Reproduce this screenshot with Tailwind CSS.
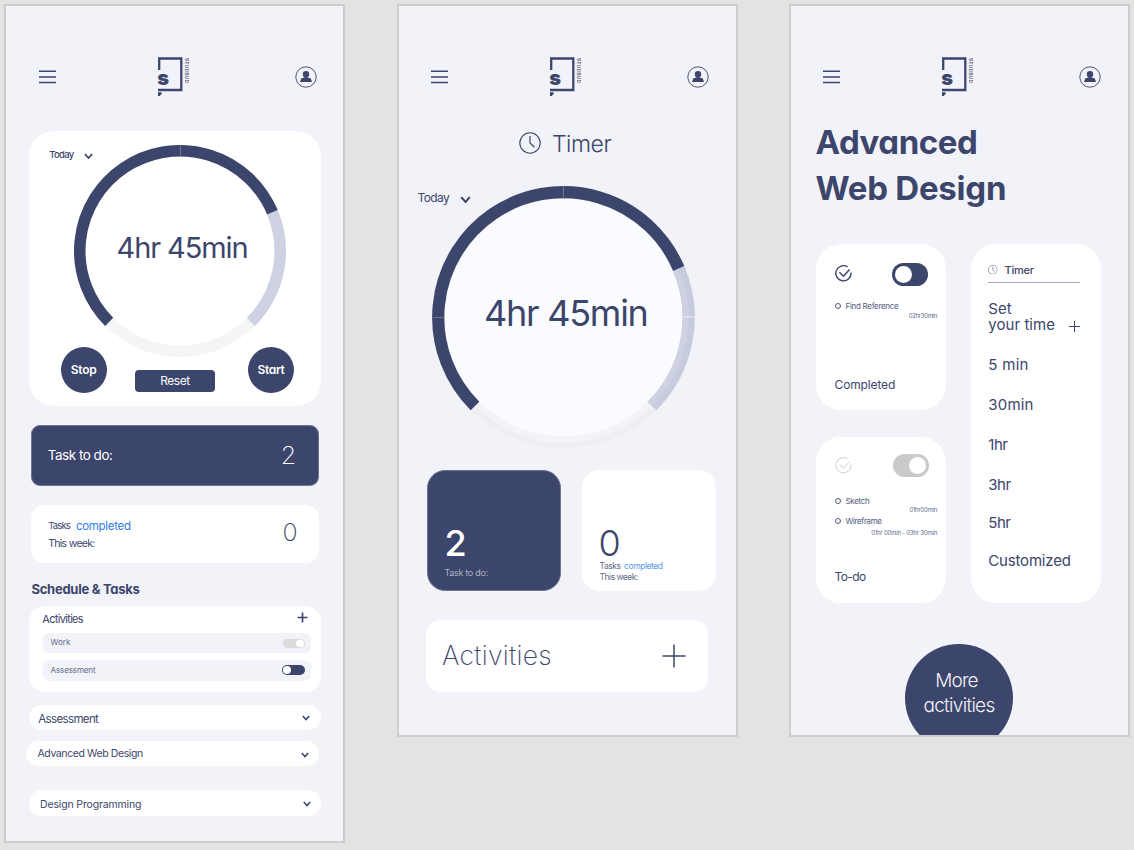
<!DOCTYPE html>
<html lang="en">
<head>
<meta charset="utf-8">
<title>Studbud</title>
<script src="https://cdn.jsdelivr.net/npm/@tailwindcss/browser@4"></script>
</head>
<body class="h-[850px] w-[1134px] overflow-hidden bg-[#e3e3e3] font-['Inter',sans-serif] whitespace-nowrap text-[#3c456b]">

<!-- Shared symbols -->
<svg class="hidden">
  <symbol id="menu" viewBox="0 0 17 14"><path d="M0 1.2h17M0 7h17M0 12.5h17" stroke="#3c456b" stroke-width="1.4" fill="none"/></symbol>
  <symbol id="user" viewBox="0 0 22 22"><circle cx="11" cy="11" r="10.2" fill="none" stroke="#3c456b" stroke-width=".9"/><circle cx="11" cy="8.200" r="3.200" fill="#3c456b"/><path d="M9.500 10.500h3v1.300h1.700q2.200.6 2.700 4.200H5.100q.5-3.600 2.700-4.200h1.700z" fill="#3c456b"/></symbol>
  <symbol id="logo" viewBox="0 0 32 40">
    <path d="M2.200 13V1.500H24.300V33H1" fill="none" stroke="#3c456b" stroke-width="2.300"/>
    <path d="M1 35.300h3.600v2l-1.200 .8-.6 .9H1z" fill="#3c456b"/>
    <text x="0.200" y="28" font-family="Inter" font-weight="900" font-size="20" fill="#3c456b">s</text>
    <text transform="translate(27.500 1) rotate(90)" font-family="Inter" font-weight="500" font-size="5" fill="#3c456b" textLength="25">STUDBUD</text>
  </symbol>
  <symbol id="chev" viewBox="0 0 10 7"><path d="M1 1l4 4.500 4-4.500" fill="none" stroke="#3c456b" stroke-width="1.900"/></symbol>
  <symbol id="plus" viewBox="0 0 12 12"><path d="M6 .5v11M.5 6h11" fill="none" stroke="#3c456b" stroke-width="1.800"/></symbol>
  <symbol id="clock" viewBox="0 0 22 22"><circle cx="11" cy="11" r="10.200" fill="none" stroke="#3c456b" stroke-width="1.100"/><path d="M11 4v7l4.500 4.300" fill="none" stroke="#3c456b" stroke-width="1.200"/></symbol>
  <symbol id="check" viewBox="0 0 17 17"><path d="M12.600 1.900A7.600 7.600 0 1 0 16 7.500" fill="none" stroke="currentColor" stroke-width="1.400"/><path d="M4.300 7.200l4.200 4 6-6.800" fill="none" stroke="currentColor" stroke-width="1.500"/></symbol>
  <symbol id="check-thin" viewBox="0 0 17 17"><path d="M12.600 1.900A7.600 7.600 0 1 0 16 7.500" fill="none" stroke="currentColor" stroke-width="1"/><path d="M4.300 7.200l4.200 4 6-6.800" fill="none" stroke="currentColor" stroke-width="1"/></symbol>
</svg>

<main class="flex items-start pt-1 pl-1">

  <!-- Home -->
  <section class="h-[839px] w-[341px] border-2 border-[#cbcccd] bg-[#f2f3f8]">
    <header class="mt-[51px] flex h-10 items-start">
      <svg class="mt-[13px] ml-[33px] h-[14px] w-[17px]"><use href="#menu"/></svg>
      <svg class="ml-[100.500px] h-10 w-8"><use href="#logo"/></svg>
      <svg class="mt-[9px] ml-[106px] size-[22px]"><use href="#user"/></svg>
    </header>

    <article class="mt-[34px] ml-[22.5px] grid h-[275px] w-[292.5px] rounded-[25px] bg-white *:col-start-1 *:row-start-1">
      <svg class="mt-[13.5px] ml-[45.5px] size-[212px]" viewBox="-106 -106 212 212" fill="none" stroke-width="11.5">
        <circle r="100.200" stroke="#f4f5f7"/>
        <path d="M92.400 -38.700A100.200 100.200 0 0 1 70.850 70.850" stroke="#ced1e1"/>
        <path d="M-70.850 70.850A100.200 100.200 0 1 1 92.400 -38.700" stroke="#3c456b"/>
        <path d="M.5 -106v12" stroke="#6f7694" stroke-width="1"/>
      </svg>
      <div class="mt-[19.4px] ml-[20.700px] flex items-start self-start">
        <span class="w-[25px] text-[9.500px] leading-[10px] font-medium tracking-[-0.700px]">Today</span>
        <svg class="mt-[2.300px] ml-[9.500px] h-[6.500px] w-[9px]"><use href="#chev"/></svg>
      </div>
      <h2 class="mt-[102.2px] ml-[88px] self-start text-[29px] leading-[29px] tracking-[-1.100px]">4hr 45min</h2>
      <div class="mt-[215.7px] flex items-start self-start pl-[32.2px] text-xs text-white">
        <button class="size-[46px] rounded-full bg-[#3c456b] font-semibold tracking-[-0.2px]">Stop</button>
        <button class="mt-[23.800px] ml-[28.300px] h-[21.500px] w-[80px] rounded-[4px] bg-[#3c456b] tracking-[-0.47px]">Reset</button>
        <button class="ml-[33px] size-[46px] rounded-full bg-[#3c456b] font-semibold tracking-[-0.3px] [font-feature-settings:'cv11']">Start</button>
      </div>
    </article>

    <article class="mt-[19px] ml-[24.800px] flex h-[60.7px] w-[288.500px] items-center justify-between rounded-[9px] border border-[#6d7596] bg-[#3c456b] pr-[22px] pl-[16px] text-white">
      <span class="text-[13.500px] tracking-[-0.500px]">Task to do:</span>
      <span class="text-[25px] font-extralight">2</span>
    </article>

    <article class="mt-[19.300px] ml-[25px] flex h-[58px] w-[288px] items-start justify-between rounded-[14px] bg-white pr-[21.500px] pl-[17.200px]">
      <div class="pt-[16px]">
        <p class="flex leading-[11.5px]"><span class="w-[27.800px] text-[9.500px] leading-[10px] tracking-[-0.85px]">Tasks</span><span class="text-[11.5px] tracking-[-0.3px] text-[#2f7be8]">completed</span></p>
        <p class="mt-[5.500px] text-[10.500px] leading-[11px] tracking-[-0.7px]">This week:</p>
      </div>
      <span class="mt-[15.400px] text-[25px] leading-[25px] font-extralight">0</span>
    </article>

    <h3 class="mt-[19.800px] ml-[25.500px] text-[13px] leading-[13px] font-bold tracking-[-0.27px] [font-feature-settings:'cv11']">Schedule &amp; Tasks</h3>

    <article class="mt-[10.200px] ml-[22.500px] h-[86.500px] w-[292.500px] rounded-[16px] bg-white pt-[7.200px] pr-[10.500px] pl-[14.500px]">
      <div class="flex h-[19.800px] items-start justify-between">
        <h4 class="-ml-[0.700px] mt-[0.500px] text-[11px] leading-[11px] tracking-[-0.680px]">Activities</h4>
        <svg class="mr-[2.500px] -mt-[0.700px] size-[11px]"><use href="#plus"/></svg>
      </div>
      <div class="flex h-5 items-center justify-between rounded-[6px] bg-[#f2f3f8] pr-[6px] pl-[7.500px] text-[8px] text-[#626a8b]">
        <span class="-mt-px">Work</span>
        <i class="mt-px flex h-[9.500px] w-[22px] justify-end rounded-full bg-[#dcdcdd] p-px"><b class="size-[7.500px] rounded-full bg-white"></b></i>
      </div>
      <div class="mt-[7px] flex h-[21px] items-center justify-between rounded-[6px] bg-[#f2f3f8] pr-[6px] pl-[7.500px] text-[8px] text-[#626a8b]">
        <span class="tracking-[-0.11px]">Assessment</span>
        <i class="flex h-[10px] w-[22.500px] rounded-full bg-[#3c456b] p-px"><b class="size-[8px] rounded-full bg-white"></b></i>
      </div>
    </article>

    <article class="mt-[12.700px] ml-[22.500px] flex h-[25px] w-[292.500px] items-start justify-between rounded-[12.500px] bg-white pr-[11px] pl-[9.700px]">
      <span class="mt-[9.300px] text-[11.500px] leading-[11.500px] tracking-[-0.620px]">Assessment</span>
      <svg class="mt-[9.500px] h-[6px] w-[8px]"><use href="#chev"/></svg>
    </article>
    <article class="mt-[10.800px] ml-[20.300px] flex h-[25.300px] w-[292.500px] items-start justify-between rounded-[12.500px] bg-white pr-[10px] pl-[11.200px]">
      <span class="mt-[7.600px] text-[10.500px] leading-[10.500px] tracking-[-0.4px]">Advanced Web Design</span>
      <svg class="mt-[10.800px] h-[6px] w-[8px]"><use href="#chev"/></svg>
    </article>
    <article class="mt-[23.700px] ml-[22.500px] flex h-[26px] w-[292.500px] items-start justify-between rounded-[13px] bg-white pr-[10px] pl-[11.500px]">
      <span class="mt-[10.300px] text-[10.500px] leading-[10.500px] tracking-[-0.150px]">Design Programming</span>
      <svg class="mt-[10.800px] h-[6px] w-[8px]"><use href="#chev"/></svg>
    </article>
  </section>

  <!-- Timer -->
  <section class="ml-[52px] h-[733px] w-[341px] border-2 border-[#cbcccd] bg-[#f2f3f8]">
    <header class="mt-[51px] flex h-10 items-start">
      <svg class="mt-[13px] ml-[32px] h-[14px] w-[17px]"><use href="#menu"/></svg>
      <svg class="ml-[100.500px] h-10 w-8"><use href="#logo"/></svg>
      <svg class="mt-[9px] ml-[106px] size-[22px]"><use href="#user"/></svg>
    </header>

    <h1 class="mt-[34.500px] ml-[119.500px] flex h-[54.500px] items-start">
      <svg class="size-[22px]"><use href="#clock"/></svg>
      <span class="mt-[1.300px] ml-[11.500px] text-[23px] leading-[23px] font-light tracking-[-0.500px]">Timer</span>
    </h1>

    <div class="ml-[19px] grid h-[262.500px] w-[277.500px] *:col-start-1 *:row-start-1">
      <svg class="ml-[14px] h-[263px] w-[263px]" viewBox="-131.500 -131.500 263 263" fill="none">
        <circle r="121" fill="#fafbfe"/>
        <circle r="125.200" stroke="#eeeff3" stroke-width="12.200"/>
        <circle r="122" stroke="#f3f4f6" stroke-width="6"/>
        <path d="M115.200 -49A125.200 125.200 0 0 1 88.500 88.500" stroke="#c6cbde" stroke-width="12.200"/>
        <path d="M112.400 -47.700A122.100 122.100 0 0 1 86.300 86.300" stroke="#cdd1e1" stroke-width="6"/>
        <path d="M-88.500 88.500A125.200 125.200 0 1 1 115.200 -49" stroke="#3c456b" stroke-width="12.200"/>
        <path d="M0 -131.500v12.500M-131 0h12" stroke="#6f7694" stroke-width="1"/>
        <path d="M119 -.500h12.500" stroke="#eceef5" stroke-width="1"/>
      </svg>
      <div class="mt-[6.400px] -ml-[0.500px] flex items-start self-start">
        <span class="w-[32px] text-[12px] leading-[12px] tracking-[-0.600px]">Today</span>
        <svg class="mt-[4px] ml-[10.500px] h-[7.500px] w-[11px]"><use href="#chev"/></svg>
      </div>
      <h2 class="mt-[109px] ml-[66px] self-start text-[36px] leading-[36px] tracking-[-1.250px]">4hr 45min</h2>
    </div>

    <div class="mt-[21.500px] ml-[28px] flex gap-[21.300px]">
      <article class="h-[121px] w-[134px] rounded-[18px] border border-[#6d7596] bg-[#3c456b] pt-[54px] pl-[16.500px] text-white">
        <p class="text-[36px] leading-[36px] font-medium">2</p>
        <p class="mt-[7.300px] text-[9px] leading-[9px] font-light tracking-[-0.200px] text-[#c9ccda]">Task to do:</p>
      </article>
      <article class="h-[121px] w-[133.500px] rounded-[18px] bg-white pt-[55px] pl-[17.300px] text-[#626a8b]">
        <p class="-ml-[1px] text-[36px] leading-[36px] font-light text-[#3c456b]">0</p>
        <p class="mt-[1px] text-[8.500px] leading-[9px] tracking-[-0.450px]"><span class="inline-block w-[24.500px]">Tasks</span><span class="text-[#5b99ee]">completed</span></p>
        <p class="mt-[2px] text-[8.500px] leading-[9px] tracking-[-0.500px]">This week:</p>
      </article>
    </div>

    <article class="mt-[29px] ml-[27px] flex h-[71.500px] w-[282px] items-center justify-between rounded-[14px] bg-white pr-[22px] pl-[16px]">
      <span class="mt-px text-[26.500px] font-extralight tracking-[0.300px]">Activities</span>
      <svg class="size-[24px]" viewBox="0 0 24 24"><path d="M12 .5v23M.5 12h23" stroke="#3c456b" stroke-width="1.500"/></svg>
    </article>
  </section>

  <!-- Course -->
  <section class="ml-[51px] h-[733px] w-[341px] overflow-hidden border-2 border-[#cbcccd] bg-[#f2f3f8]">
    <header class="mt-[51px] flex h-10 items-start">
      <svg class="mt-[13px] ml-[32px] h-[14px] w-[17px]"><use href="#menu"/></svg>
      <svg class="ml-[100.500px] h-10 w-8"><use href="#logo"/></svg>
      <svg class="mt-[9px] ml-[106px] size-[22px]"><use href="#user"/></svg>
    </header>

    <h1 class="mt-[22px] ml-[24.500px] text-[33px] leading-[46px] font-bold tracking-[-0.250px] [font-feature-settings:'cv11']"><span class="tracking-[-0.450px]">Advanced</span><br>Web Design</h1>

    <div class="mt-[33px] ml-[25px] flex gap-[25px]">
      <div class="flex w-[130px] flex-col gap-[27.500px]">
        <article class="flex h-[165.500px] flex-col rounded-[25px] bg-white px-[18.500px] pt-[19px] pb-[18.500px]">
          <div class="flex items-start justify-between">
            <svg class="mt-[2px] size-[17px]"><use href="#check"/></svg>
            <i class="flex h-[22.500px] w-[36px] rounded-full bg-[#3c456b] p-[2.700px] pl-[3.500px]"><b class="size-[17.200px] rounded-full bg-white"></b></i>
          </div>
          <p class="mt-[16px] flex items-center text-[8px] leading-[9px] tracking-[-0.300px] text-[#515a7c]"><i class="mr-[4.500px] ml-[0.500px] size-[6px] rounded-full border border-[#515a7c]"></i>Find Reference</p>
          <p class="-mr-[9.500px] mt-px text-right text-[6px] leading-[7px] tracking-[-0.300px] text-[#626a8b]">02hr30min</p>
          <h3 class="mt-auto text-xs leading-[12px] tracking-[-0.130px]">Completed</h3>
        </article>
        <article class="flex h-[165.500px] flex-col rounded-[25px] bg-white px-[18.500px] pt-[17px] pb-[19.500px]">
          <div class="flex items-start justify-between text-[#cfcfcf]">
            <svg class="mt-[3px] size-[17px]"><use href="#check-thin"/></svg>
            <i class="-mr-[1px] flex h-[22.500px] w-[36px] justify-end rounded-full bg-[#cacaca] p-[2.700px]"><b class="size-[17.200px] rounded-full bg-white"></b></i>
          </div>
          <p class="mt-[20px] flex items-center text-[8px] leading-[9px] tracking-[-0.320px] text-[#515a7c]"><i class="mr-[4.500px] ml-[0.500px] size-[6px] rounded-full border border-[#515a7c]"></i>Sketch</p>
          <p class="-mr-[9.500px] text-right text-[6px] leading-[7px] tracking-[-0.250px] text-[#626a8b]">01hr00min</p>
          <p class="mt-[4px] flex items-center text-[8px] leading-[9px] tracking-[-0.380px] text-[#515a7c]"><i class="mr-[4.500px] ml-[0.500px] size-[6px] rounded-full border border-[#515a7c]"></i>Wireframe</p>
          <p class="-mr-[9.500px] mt-[3px] text-right text-[6px] leading-[7px] tracking-[-0.200px] text-[#626a8b]">01hr 00min - 03hr 30min</p>
          <h3 class="mt-auto text-xs leading-[12px] tracking-[-0.590px]">To-do</h3>
        </article>
      </div>

      <article class="h-[358.500px] w-[130px] rounded-[25px] bg-white pt-[20.500px] pl-[17.300px] text-[15px] leading-[16px]">
        <div class="flex h-[18.800px] w-[92px] items-start border-b border-[#a3a8c0]">
          <svg class="size-[9.500px]"><use href="#clock"/></svg>
          <span class="mt-[0.500px] ml-[6.700px] text-[11px] leading-[11px] font-medium tracking-[-0.250px]">Timer</span>
        </div>
        <div class="mt-[17.300px] flex w-[92px] items-end justify-between">
          <p class="tracking-[0.050px]">Set<br>your time</p>
          <svg class="mb-px size-[11px]" viewBox="0 0 11 11"><path d="M5.500 0v11M0 5.500h11" stroke="#3c456b" stroke-width="1"/></svg>
        </div>
        <ul>
          <li class="mt-[24.200px] tracking-[0.300px]">5 min</li>
          <li class="mt-[24px] tracking-[0.200px]">30min</li>
          <li class="mt-[24px] tracking-[-0.500px]">1hr</li>
          <li class="mt-[24px] tracking-[-0.500px]">3hr</li>
          <li class="mt-[22.200px] tracking-[-0.500px]">5hr</li>
          <li class="mt-[22.200px] tracking-[-0.180px]">Customized</li>
        </ul>
      </article>
    </div>

    <button class="mt-[41px] ml-[114px] flex size-[108px] flex-col items-center rounded-full bg-[#3c456b] pt-[24px] text-[19px] leading-[25.300px] font-light text-[#f2f3f8] [font-feature-settings:'cv11']"><span class="mr-[5px] tracking-[-0.900px]">More</span><span class="tracking-[-0.700px]">activities</span></button>
  </section>
</main>
</body>
</html>
